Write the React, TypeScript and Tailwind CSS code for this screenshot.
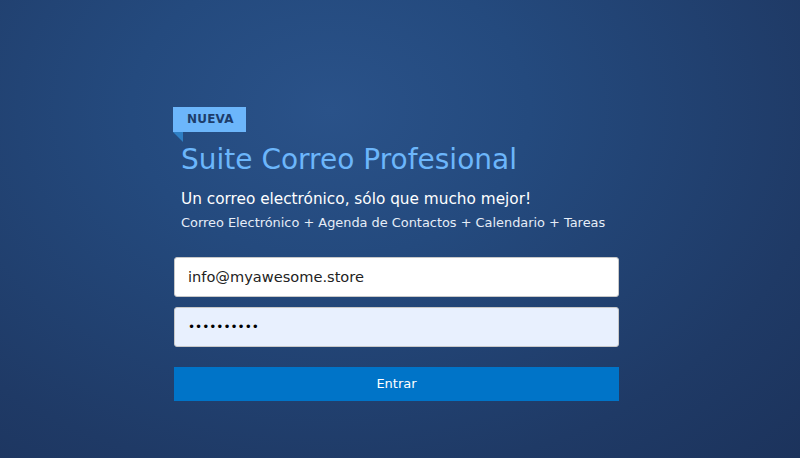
import React from "react";

export default function App() {
  return (
    <div
      className="w-[800px] h-[458px] overflow-hidden bg-[radial-gradient(ellipse_at_330px_110px,#2a5289_0%,#244a7e_30%,#1f3a66_75%,#1c335c_100%)]"
      style={{ fontFamily: '"DejaVu Sans", "Noto Sans", sans-serif' }}
    >
      <div className="w-[445px] ml-[174px] pt-[106px]">
        <div className="-ml-px">
          <div className="inline-block bg-[#6cb6fb] text-[#1d3d6b] font-bold text-[12px] tracking-[0.2px] leading-[25px] h-[25px] pl-[14px] pr-[12px]">
            NUEVA
          </div>
          <div className="w-0 h-0 border-t-[10px] border-t-[#2f7fc4] border-l-[10px] border-l-transparent" />
        </div>
        <div className="pl-[7px] mt-[2px]">
          <h1 className="text-[#6cb6fb] text-[28px] leading-[32px]">Suite Correo Profesional</h1>
          <p className="text-white text-[15.3px] leading-[20px] mt-[13px]">Un correo electrónico, sólo que mucho mejor!</p>
          <p className="text-[#e6edf7] text-[12.9px] leading-[18px] mt-[5px]">
            Correo Electrónico + Agenda de Contactos + Calendario + Tareas
          </p>
        </div>
        <div className="mt-[25px] flex flex-col gap-[10px]">
          <div className="h-[40px] bg-white rounded-[3px] border border-[#c8c8c8] flex items-center px-[13px] text-[14.6px] text-[#222]">
            info@myawesome.store
          </div>
          <div className="h-[40px] bg-[#e8f0fe] rounded-[3px] border border-[#c8c8c8] flex items-center px-[13px] text-[12px] text-black">
            ••••••••••
          </div>
        </div>
        <button className="mt-[20px] w-full h-[34px] bg-[#0074c8] text-white text-[13px]">Entrar</button>
      </div>
    </div>
  );
}
